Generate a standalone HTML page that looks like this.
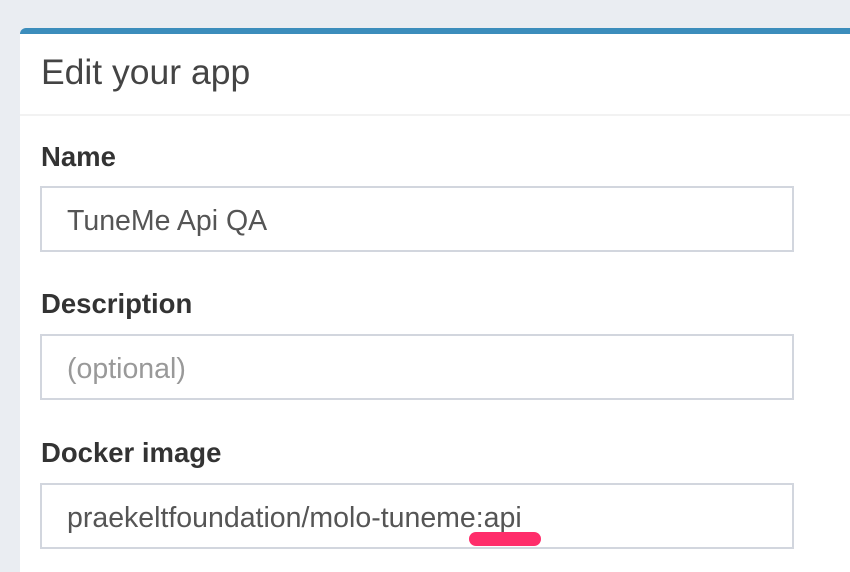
<!DOCTYPE html><html><head><style>
html,body{margin:0;width:850px;height:572px;overflow:hidden}
body{background:#eaedf2;font-family:"Liberation Sans",sans-serif;position:relative}
.card{position:absolute;left:20px;top:28px;width:840px;height:560px;background:#fff;border-top:6px solid #3c8dbc;border-radius:6px 0 0 0}
.h{position:absolute;left:41px;top:52px;font-size:35.5px;color:#444}
.div{position:absolute;left:20px;top:114px;width:830px;height:2px;background:#f2f2f2}
.l{position:absolute;left:41px;font-size:27.5px;font-weight:bold;color:#333}
.i{position:absolute;left:40px;height:62px;border:2px solid #d2d6de;font-size:28.5px;color:#555;line-height:66px;padding-left:25px;box-sizing:content-box;width:725px}
.pk{position:absolute;left:469px;top:532px;width:72px;height:14px;border-radius:7px;background:#ff2d6b}
</style></head><body>
<div class="card"></div>
<div class="h">Edit your app</div>
<div class="div"></div>
<div class="l" style="top:141px">Name</div>
<div class="i" style="top:186px">TuneMe Api QA</div>
<div class="l" style="top:288px">Description</div>
<div class="i" style="top:334px;color:#999">(optional)</div>
<div class="l" style="top:437px">Docker image</div>
<div class="i" style="top:483px">praekeltfoundation/molo-tuneme:api</div>
<div class="pk"></div>
</body></html>
